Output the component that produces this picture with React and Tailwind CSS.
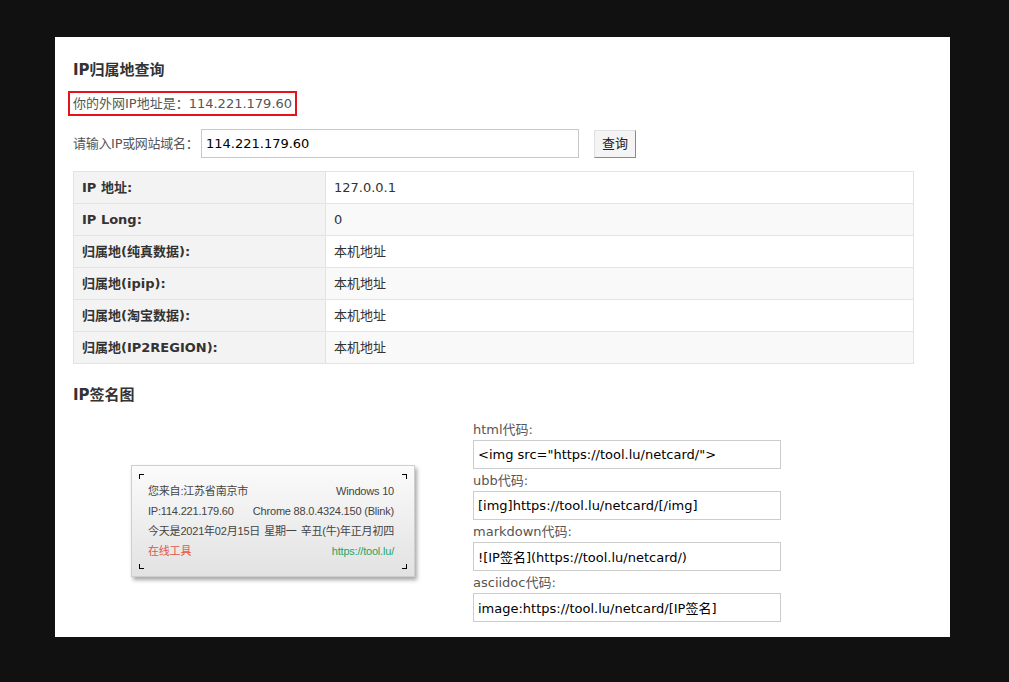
import React from 'react';

const rows = [
  ['IP 地址:', '127.0.0.1'],
  ['IP Long:', '0'],
  ['归属地(纯真数据):', '本机地址'],
  ['归属地(ipip):', '本机地址'],
  ['归属地(淘宝数据):', '本机地址'],
  ['归属地(IP2REGION):', '本机地址'],
];

const codes = [
  ['html代码:', '<img src="https://tool.lu/netcard/">'],
  ['ubb代码:', '[img]https://tool.lu/netcard/[/img]'],
  ['markdown代码:', '![IP签名](https://tool.lu/netcard/)'],
  ['asciidoc代码:', 'image:https://tool.lu/netcard/[IP签名]'],
];

function NetCard() {
  return (
    <div className="relative h-[112px] w-[284px] whitespace-nowrap border border-[#cfcfcf] bg-gradient-to-b from-[#fbfbfb] to-[#e2e2e2] pl-[16px] pr-[20px] pt-[15px] text-[11px] leading-[20px] tracking-[-0.2px] text-[#444] shadow-[2px_3px_4px_rgba(0,0,0,0.35)] [font-family:'Liberation_Sans','Noto_Sans_CJK_SC',sans-serif]">
      <span className="absolute left-[7px] top-[8px] h-[5px] w-[5px] border-l-[1.5px] border-t-[1.5px] border-black" />
      <span className="absolute right-[7px] top-[8px] h-[5px] w-[5px] border-r-[1.5px] border-t-[1.5px] border-black" />
      <span className="absolute bottom-[7px] left-[7px] h-[5px] w-[5px] border-b-[1.5px] border-l-[1.5px] border-black" />
      <span className="absolute bottom-[7px] right-[7px] h-[5px] w-[5px] border-b-[1.5px] border-r-[1.5px] border-black" />
      <div className="flex justify-between">
        <span>您来自:江苏省南京市</span>
        <span>Windows 10</span>
      </div>
      <div className="flex justify-between">
        <span>IP:114.221.179.60</span>
        <span>Chrome 88.0.4324.150 (Blink)</span>
      </div>
      <div className="flex justify-between">
        <span>今天是2021年02月15日</span>
        <span>星期一</span>
        <span>辛丑(牛)年正月初四</span>
      </div>
      <div className="flex justify-between">
        <span className="text-[#e5534b]">在线工具</span>
        <span className="text-[#27a565]">https://tool.lu/</span>
      </div>
    </div>
  );
}

export default function App() {
  return (
    <div className="min-h-[682px] bg-[#111111] pl-[55px] pt-[37px] [font-family:'DejaVu_Sans','Noto_Sans_CJK_SC',sans-serif] text-[#333]">
      <div className="w-[895px] bg-white px-[18px] pb-[15px] pt-[23px]">
        <h2 className="text-[15px] font-bold leading-[20px] text-[#333]">IP归属地查询</h2>

        <div className="mt-[11px]">
          <span className="-ml-[5px] inline-block h-[25px] border-2 border-[#e5141b] px-[3px] text-[13px] leading-[21px] text-[#555]">
            你的外网IP地址是：114.221.179.60
          </span>
        </div>

        <div className="mt-[13px] flex items-center">
          <span className="w-[128px] shrink-0 whitespace-nowrap text-[13px] tracking-[-0.3px] text-[#555]">请输入IP或网站域名：</span>
          <input
            defaultValue="114.221.179.60"
            className="h-[29px] w-[378px] border border-[#c8c8c8] px-[4px] text-[13px] text-black outline-none"
          />
          <button className="ml-[15px] h-[28px] w-[42px] border border-b-[#8a8a8a] border-l-[#e0e0e0] border-r-[#8a8a8a] border-t-[#e0e0e0] bg-[#f4f4f4] text-[13px] text-[#222]">
            查询
          </button>
        </div>

        <table className="mt-[13px] w-[841px] border-collapse text-[13px]">
          <tbody>
            {rows.map(([k, v], i) => (
              <tr key={k} className="h-[32px]">
                <td className="w-[252px] border border-[#e3e3e3] bg-[#f3f3f3] px-[8px] font-bold">{k}</td>
                <td className={`border border-[#e3e3e3] px-[8px] ${i % 2 ? 'bg-[#f9f9f9]' : 'bg-white'}`}>{v}</td>
              </tr>
            ))}
          </tbody>
        </table>

        <h2 className="mt-[21px] text-[15px] font-bold leading-[20px] text-[#333]">IP签名图</h2>

        <div className="mt-[15px] flex">
          <div className="flex w-[400px] items-center justify-center">
            <NetCard />
          </div>
          <div className="flex flex-col">
            {codes.map(([label, value], i) => (
              <div key={label} className={i ? 'mt-[2px]' : ''}>
                <div className="text-[13px] leading-[20px] text-[#555]">{label}</div>
                <input
                  readOnly
                  value={value}
                  className="h-[29px] w-[308px] border border-[#cccccc] px-[4px] text-[13px] text-black outline-none"
                />
              </div>
            ))}
          </div>
        </div>
      </div>
    </div>
  );
}
